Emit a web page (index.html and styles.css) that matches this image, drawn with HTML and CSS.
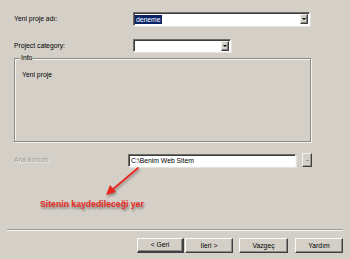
FILE: index.html
```html
<!DOCTYPE html>
<html lang="tr">
<head>
<meta charset="utf-8">
<title>Yeni proje</title>
<link rel="stylesheet" href="styles.css">
</head>
<body>
<div class="dialog">
  <div class="row r1">
    <span class="label l1">Yeni proje adı:</span>
    <div class="combo wide"><span class="sel">deneme</span><span class="drop"><i></i></span></div>
  </div>
  <div class="row r2">
    <span class="label l1">Project category:</span>
    <div class="combo narrow"><span class="drop"><i></i></span></div>
  </div>
  <div class="group">
    <span class="legend">Info</span>
    <p class="info">Yeni proje</p>
  </div>
  <div class="row r3">
    <span class="label l3 dim">Ana konum</span>
    <div class="textbox">C:\Benim Web Sitem</div>
    <span class="browse">...</span>
  </div>
  <div class="note">Sitenin kaydedileceği yer</div>
  <div class="sep"></div>
  <div class="buttons">
    <span class="btn b-back">&lt; Geri</span>
    <span class="btn b-next">İleri &gt;</span>
    <span class="btn b-cancel">Vazgeç</span>
    <span class="btn b-help">Yardım</span>
  </div>
  <svg class="arrow" width="40" height="34" viewBox="0 0 40 34">
    <line x1="34" y1="3" x2="8" y2="25" stroke="#ea2620" stroke-width="1.8" stroke-linecap="round"/>
    <polygon points="2,30 6,20 12,27" fill="#ea2620"/>
  </svg>
</div>
</body>
</html>
```

FILE: styles.css
```css
html, body {
  margin: 0;
  padding: 0;
  background: #d4d0c8;
}
.dialog {
  position: relative;
  width: 350px;
  height: 259px;
  box-sizing: border-box;
  padding: 12px 0 0 14px;
  display: flex;
  flex-direction: column;
  font-family: "Liberation Sans", Arial, sans-serif;
  font-size: 6.8px;
  color: #000;
  overflow: hidden;
}
.row {
  display: flex;
  align-items: center;
}
.r2 { margin-top: 13px; }
.r3 { margin-top: 11px; }
.label { flex: none; line-height: 8px; }
.l1 { width: 119px; }
.l3 { width: 114px; }
.dim {
  color: #9c988f;
  text-shadow: 1px 1px 0 #f2f0ec;
}
.combo, .textbox {
  position: relative;
  box-sizing: border-box;
  background: #fff;
  border-top: 1px solid #6e6c68;
  border-left: 1px solid #6e6c68;
  border-right: 1px solid #fafafa;
  border-bottom: 1px solid #fafafa;
  box-shadow: inset 1px 1px 0 #3c3c3c, 1px 1px 0 #e4e2dc;
  display: flex;
  align-items: center;
}
.wide { width: 177px; height: 14px; }
.narrow { width: 98px; height: 13px; }
.sel {
  margin-left: 1px;
  background: #0a246a;
  color: #fff;
  line-height: 9px;
  padding: 0 1px;
}
.drop {
  margin-left: auto;
  margin-right: 1px;
  width: 8px;
  height: 10px;
  box-sizing: border-box;
  background: #d4d0c8;
  border-top: 1px solid #f4f2ee;
  border-left: 1px solid #f4f2ee;
  border-right: 1px solid #404040;
  border-bottom: 1px solid #404040;
  box-shadow: inset -1px -1px 0 #808080;
  display: flex;
  align-items: center;
  justify-content: center;
}
.drop i {
  width: 0;
  height: 0;
  border-left: 2px solid transparent;
  border-right: 2px solid transparent;
  border-top: 2px solid #000;
  margin-right: 1px;
}
.group {
  position: relative;
  margin-top: 6px;
  width: 297px;
  height: 84px;
  box-sizing: border-box;
  border: 1px solid #8c8a86;
  box-shadow: inset 1px 1px 0 #f6f5f2, 1px 1px 0 #f6f5f2;
}
.legend {
  position: absolute;
  top: -5px;
  left: 5px;
  padding: 0 1px;
  background: #d4d0c8;
  line-height: 8px;
}
.info {
  margin: 12px 0 0 7px;
  line-height: 8px;
}
.textbox {
  width: 168px;
  height: 13px;
  padding-left: 2px;
  line-height: 9px;
}
.browse {
  margin-left: 6px;
  width: 10px;
  height: 14px;
  box-sizing: border-box;
  background: #d4d0c8;
  border-top: 1px solid #f4f2ee;
  border-left: 1px solid #f4f2ee;
  border-right: 1px solid #404040;
  border-bottom: 1px solid #404040;
  box-shadow: inset -1px -1px 0 #9a9892;
  font-size: 6px;
  line-height: 10px;
  text-align: center;
  letter-spacing: -1px;
  color: #222;
}
.note {
  margin: 32px 0 0 26px;
  font-weight: bold;
  font-size: 8.7px;
  line-height: 10px;
  color: #ec2a22;
  text-shadow: 1px 2px 2px rgba(60, 55, 50, 0.55);
}
.sep {
  margin: 20px 0 0 -7px;
  width: 336px;
  height: 1px;
  background: #9c9a96;
  border-bottom: 1px solid #f6f5f2;
}
.buttons {
  margin: 7px 0 0 123px;
  display: flex;
}
.btn {
  box-sizing: border-box;
  height: 15px;
  background: #d4d0c8;
  border-top: 1px solid #fafafa;
  border-left: 1px solid #fafafa;
  border-right: 1px solid #404040;
  border-bottom: 1px solid #404040;
  box-shadow: inset -1px -1px 0 #8c8a86;
  display: flex;
  align-items: center;
  justify-content: center;
  line-height: 8px;
}
.b-back { width: 47px; border-right-width: 2px; border-bottom-width: 2px; }
.b-next { width: 48px; margin-left: 1px; }
.b-cancel { width: 49px; margin-left: 6px; }
.b-help { width: 48px; margin-left: 7px; }
.arrow {
  position: absolute;
  left: 104px;
  top: 165px;
  filter: drop-shadow(1px 2px 1px rgba(60, 55, 50, 0.45));
}
```
